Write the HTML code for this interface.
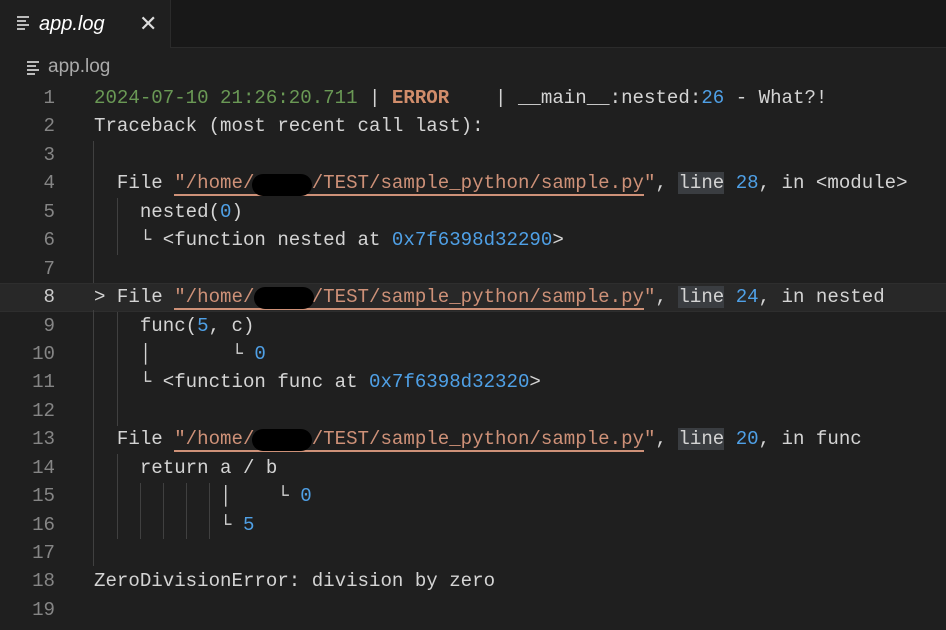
<!DOCTYPE html>
<html><head><style>
body{margin:0;width:946px;height:630px;background:#1f1f1f;overflow:hidden;font-family:"Liberation Mono",monospace;}
.tabs{position:absolute;left:0;top:0;width:946px;height:47px;background:#181818;border-bottom:1px solid #2b2b2b;}
.tab{position:absolute;left:0;top:0;width:170px;height:48px;background:#1f1f1f;border-right:1px solid #2b2b2b;}
.tab .t{position:absolute;left:39px;top:13px;font:italic 20px "Liberation Sans",sans-serif;color:#fff;}
.x{position:absolute;left:139px;top:11px;font:22px "Liberation Sans",sans-serif;color:#ddd;}
.bc{position:absolute;left:48px;top:56px;font:19px "Liberation Sans",sans-serif;color:#aaa;}
.ic{position:absolute;width:12px;}
.ic i{display:block;height:2px;background:#bbb;margin-bottom:2px;}
.ed{position:absolute;left:0;top:84px;width:946px;}
.row{position:relative;height:28.44px;line-height:28.44px;font-size:19.1px;white-space:pre;color:#d4d4d4;}
.n{position:absolute;left:0;width:55px;text-align:right;color:#858585;}
.c{position:absolute;left:94px;}
.g{color:#6a9955}.o{color:#ce9178}.b{color:#4fa0e6}.e{color:#d18d6b;font-weight:bold}
.u{border-bottom:2px solid #ce9178;}
.hl{background:#3a3d41}
.cur{background:#282828;}
.cur:before{content:"";position:absolute;left:0;right:0;top:0;bottom:0;border-top:1px solid #2e2e2e;border-bottom:1px solid #2e2e2e;}
.gd{position:absolute;width:1px;background:#404040;}
.red{position:absolute;background:#000;border-radius:12px;height:22px;width:60px;}
</style></head><body>
<div class="tabs"><div class="tab"><div class="ic" style="left:17px;top:16px"><i></i><i style="width:9px"></i><i></i><i style="width:8px"></i></div><span class="t">app.log</span><span class="x">✕</span></div></div>
<div class="ic" style="left:27px;top:61px"><i></i><i style="width:9px"></i><i></i><i style="width:8px"></i></div>
<div class="bc">app.log</div>
<div class="ed">
<div class="row"><span class="n">1</span><span class="c"><span class="g">2024-07-10 21:26:20.711</span> | <span class="e">ERROR</span>    | __main__:nested:<span class="b">26</span> - What?!</span></div>
<div class="row"><span class="n">2</span><span class="c">Traceback (most recent call last):</span></div>
<div class="row"><span class="n">3</span></div>
<div class="row"><span class="n">4</span><span class="c">  File <span class="o u">"/home/     /TEST/sample_python/sample.py</span><span class="o">"</span>, <span class="hl">line</span> <span class="b">28</span>, in &lt;module&gt;</span></div>
<div class="row"><span class="n">5</span><span class="c">    nested(<span class="b">0</span>)</span></div>
<div class="row"><span class="n">6</span><span class="c">    └ &lt;function nested at <span class="b">0x7f6398d32290</span>&gt;</span></div>
<div class="row"><span class="n">7</span></div>
<div class="row cur"><span class="n" style="color:#ccc">8</span><span class="c">&gt; File <span class="o u">"/home/     /TEST/sample_python/sample.py</span><span class="o">"</span>, <span class="hl">line</span> <span class="b">24</span>, in nested</span></div>
<div class="row"><span class="n">9</span><span class="c">    func(<span class="b">5</span>, c)</span></div>
<div class="row"><span class="n">10</span><span class="c">    │       └ <span class="b">0</span></span></div>
<div class="row"><span class="n">11</span><span class="c">    └ &lt;function func at <span class="b">0x7f6398d32320</span>&gt;</span></div>
<div class="row"><span class="n">12</span></div>
<div class="row"><span class="n">13</span><span class="c">  File <span class="o u">"/home/     /TEST/sample_python/sample.py</span><span class="o">"</span>, <span class="hl">line</span> <span class="b">20</span>, in func</span></div>
<div class="row"><span class="n">14</span><span class="c">    return a / b</span></div>
<div class="row"><span class="n">15</span><span class="c">           │    └ <span class="b">0</span></span></div>
<div class="row"><span class="n">16</span><span class="c">           └ <span class="b">5</span></span></div>
<div class="row"><span class="n">17</span></div>
<div class="row"><span class="n">18</span><span class="c">ZeroDivisionError: division by zero</span></div>
<div class="row"><span class="n">19</span></div>
</div>
<div class="gd" style="left:93px;top:141px;height:142px"></div>
<div class="gd" style="left:93px;top:310px;height:256px"></div>
<div class="gd" style="left:117px;top:198px;height:57px"></div>
<div class="gd" style="left:117px;top:312px;height:114px"></div>
<div class="gd" style="left:117px;top:454px;height:85px"></div>
<div class="gd" style="left:140px;top:483px;height:56px"></div>
<div class="gd" style="left:163px;top:483px;height:56px"></div>
<div class="gd" style="left:186px;top:483px;height:56px"></div>
<div class="gd" style="left:209px;top:483px;height:56px"></div>
<div class="red" style="left:252px;top:174px"></div>
<div class="red" style="left:254px;top:287px"></div>
<div class="red" style="left:252px;top:429px"></div>
</body></html>
